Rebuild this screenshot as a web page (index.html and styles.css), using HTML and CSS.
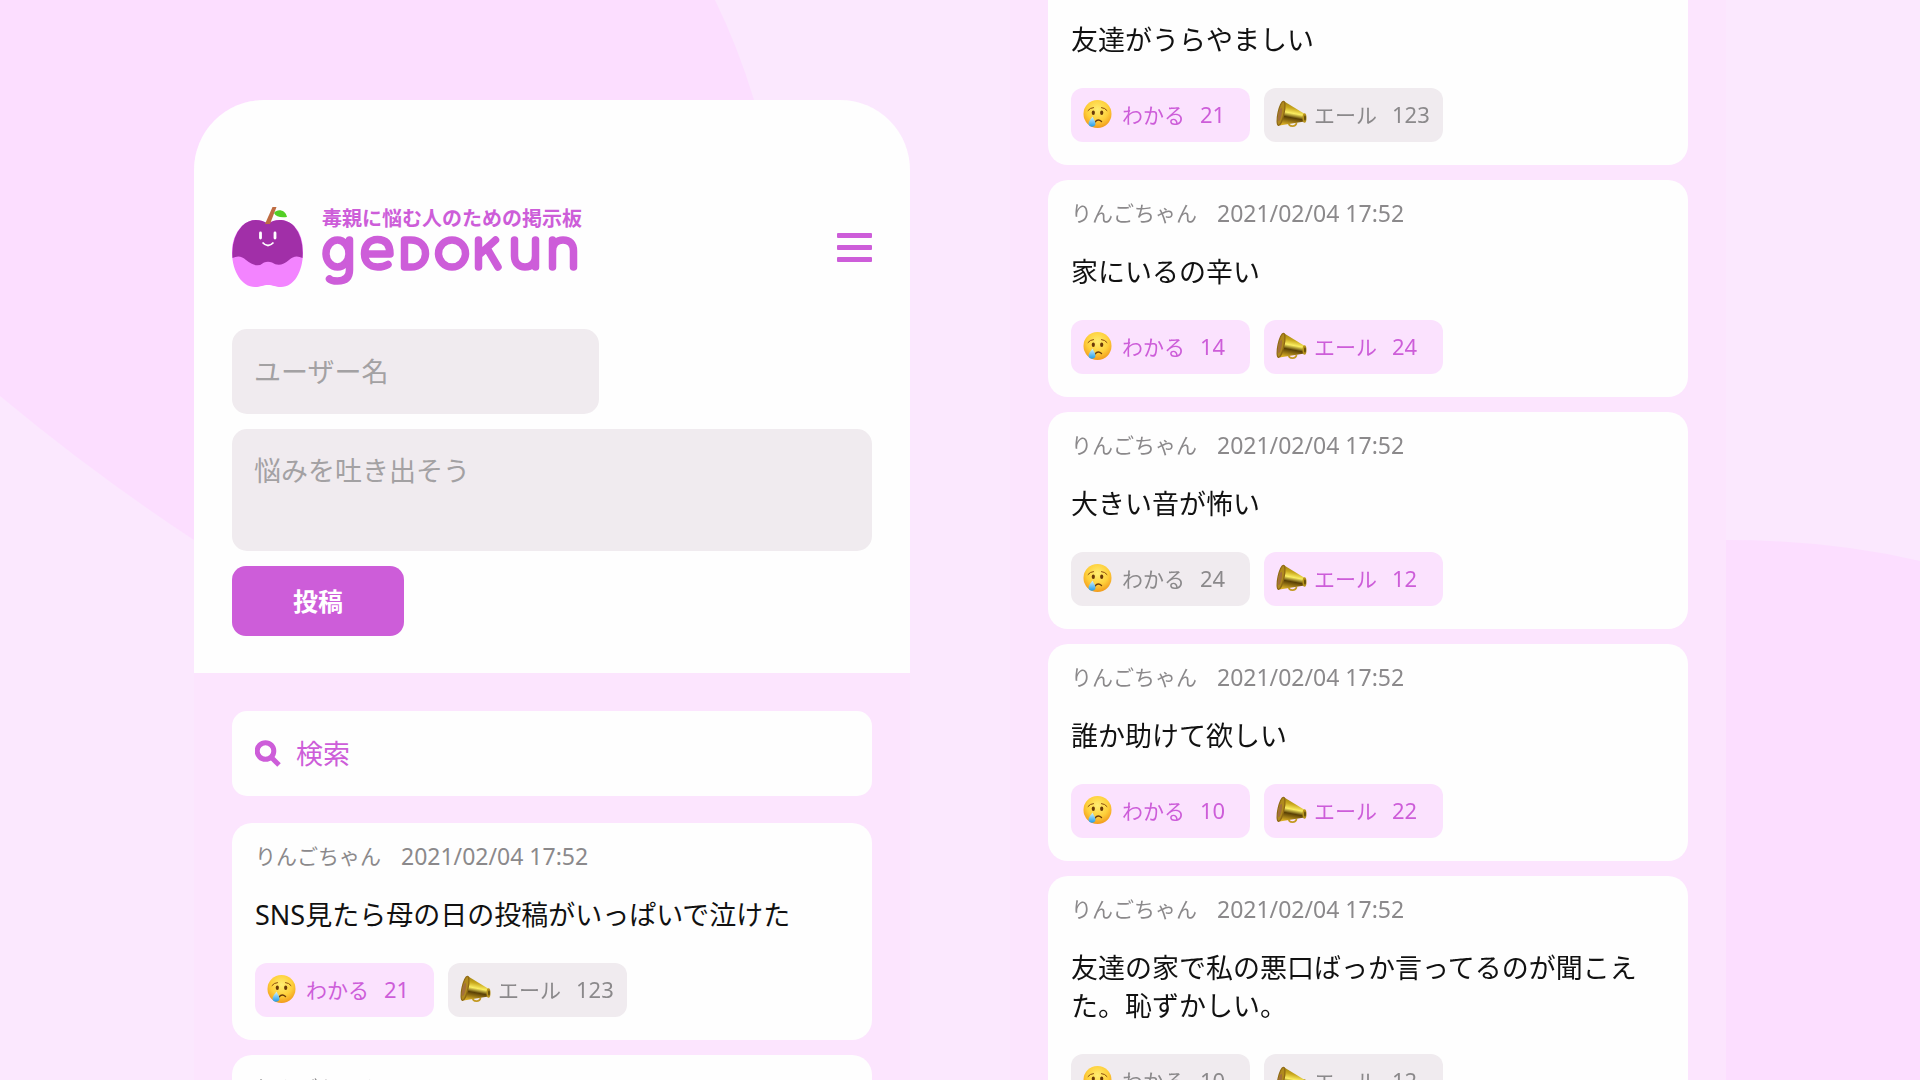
FILE: index.html
```html
<!DOCTYPE html>
<html lang="ja">

<head>
    <meta charset="UTF-8">
    <meta name="viewport" content="width=device-width, initial-scale=1.0">
    <title>gedokun</title>
    <link rel="stylesheet" href="styles.css">
</head>

<body>
    <svg class="defs" aria-hidden="true">
        <defs>
            <radialGradient id="face-fill" cx="50%" cy="35%" r="65%">
                <stop offset="0" stop-color="#ffee72" />
                <stop offset="0.6" stop-color="#fecf3a" />
                <stop offset="1" stop-color="#f19a1c" />
            </radialGradient>
            <linearGradient id="tear-fill" x1="0" y1="0" x2="0" y2="1">
                <stop offset="0" stop-color="#d5f3fd" />
                <stop offset="1" stop-color="#1f9be8" />
            </linearGradient>
            <linearGradient id="horn-fill" x1="0.6" y1="0" x2="0.4" y2="1">
                <stop offset="0" stop-color="#8f720c" />
                <stop offset="0.3" stop-color="#c9a81d" />
                <stop offset="0.5" stop-color="#fbee62" />
                <stop offset="0.68" stop-color="#5a4005" />
                <stop offset="1" stop-color="#d9ae25" />
            </linearGradient>
        </defs>
        <symbol id="cry" viewBox="0 0 28 28">
            <circle cx="14" cy="14" r="14" fill="url(#face-fill)" />
            <ellipse cx="9.800" cy="12.800" rx="1.600" ry="2.200" fill="#6b3a08" />
            <ellipse cx="18.200" cy="12.800" rx="1.600" ry="2.200" fill="#6b3a08" />
            <path d="M4.500 10.500Q6.500 7.800 10 7.600M18 7.600Q21.500 7.800 23.500 10.500" fill="none" stroke="#8a4b0c" stroke-width="1" stroke-linecap="round" />
            <path d="M11.500 22Q14.500 18.500 18 21.500" fill="none" stroke="#6b3a08" stroke-width="1.400" stroke-linecap="round" />
            <path d="M9 16.500C7.500 19 5 21 5 24a3.600 3.600 0 0 0 7 0C12 21 10 19 9 16.500Z" fill="url(#tear-fill)" />
        </symbol>
        <symbol id="horn" viewBox="0 0 31 27">
            <path d="M12.500 21.500C12.500 27 20.500 27 20.500 22" fill="none" stroke="#c39a23" stroke-width="1.800" />
            <path d="M7.500 0.500L28 13Q30 17 28.500 21L3.500 25Z" fill="url(#horn-fill)" />
            <ellipse cx="5" cy="12.800" rx="3" ry="12.300" transform="rotate(12 5 12.800)" fill="#b08a1e" stroke="#8f6914" stroke-width="1.200" />
            <ellipse cx="4" cy="14" rx="1.600" ry="7" transform="rotate(12 4 14)" fill="#a3703c" />
            <ellipse cx="28.500" cy="17.500" rx="2" ry="4.800" fill="#b8931c" />
            <ellipse cx="29" cy="17.500" rx="0.900" ry="2.800" fill="#5f4a08" />
        </symbol>
    </svg>

    <svg class="backdrop" viewBox="0 0 1920 1080" preserveAspectRatio="none" aria-hidden="true">
        <path d="M0 0H715Q738 47 754 100Q830 420 640 560Q440 640 194 540Q95 475 0 396Z" />
        <path d="M1726 540Q1830 540 1920 561V1080H1726Z" />
    </svg>

    <main class="page">
        <section class="panel panel-top">
            <div class="intro">
                <header class="header">
                    <a class="brand" href="#">
                        <svg class="apple" viewBox="0 0 72 81" aria-hidden="true">
                            <path d="M36 17C42 12 54 11 62 19C69 26 71 35 71 45C71 63 63 80 49 80C43 80 41 78 36 78C31 78 29 80 23 80C9 80 0 63 0 45C0 35 3 26 10 19C18 11 29 12 36 17Z" fill="#f384ff" />
                            <path d="M0.500 51Q8 47 14 53Q25 62 32 55.500Q36 54 40 55.500Q48 61 57 53Q63 47 70.500 51Q72 31 62 19C54 11 42 12 36 17C29 12 18 11 10 19Q-1 31 0.500 51Z" fill="#a12fa8" />
                            <path d="M33 17L40.500 0H44.500L38 17Z" fill="#be6c42" />
                            <path d="M42 6C45 2 53 2 55 10C49 11 44 10 42 6Z" fill="#53cf25" />
                            <path d="M28.500 26V31M43 26V31" fill="none" stroke="#fff" stroke-width="2.800" stroke-linecap="round" />
                            <path d="M30.500 35.500Q36 41.500 41.500 35.500" fill="none" stroke="#fff" stroke-width="1.800" />
                        </svg>
                        <span class="brand-text">
                            <span class="tagline">毒親に悩む人のための掲示板</span>
                            <svg class="wordmark" viewBox="0 0 256 50" role="img" aria-label="gedokun">
                                <g fill="none" stroke="#cd5dd9" stroke-width="7.500" stroke-linecap="round" stroke-linejoin="round">
                                    <ellipse cx="15.500" cy="18.500" rx="11.500" ry="13.500" />
                                    <path d="M27.500 5V35Q27.500 46 15.500 46Q9.500 46 7.500 44" />
                                    <path d="M42.500 19H68Q68 4.500 55.500 4.500C47 4.500 42.500 11 42.500 18.500C42.500 27 48 32 55.500 32Q62 32 66 29.500" />
                                    <path d="M82.500 5V32H89C98 32 103.500 26 103.500 18.500C103.500 11 98 5 89 5Z" />
                                    <ellipse cx="130" cy="18.500" rx="13.500" ry="13.500" />
                                    <path d="M156.500 5V32M173.500 5L158 19M166 15L176 32" />
                                    <path d="M192.500 5V21C192.500 28 197 32 203 32C210 32 213.500 27 213.500 21V5M213.500 21V32" />
                                    <path d="M230.500 32V5M230.500 16C230.500 9 235 5 241 5C248 5 251.500 9 251.500 16V32" />
                                </g>
                            </svg>
                        </span>
                    </a>
                    <button class="menu" type="button" aria-label="メニュー">
                        <span></span>
                        <span></span>
                        <span></span>
                    </button>
                </header>

                <form class="post-form">
                    <input class="field name" type="text" placeholder="ユーザー名" aria-label="ユーザー名">
                    <textarea class="field message" placeholder="悩みを吐き出そう" aria-label="悩みを吐き出そう"></textarea>
                    <button class="submit" type="button">投稿</button>
                </form>
            </div>

            <div class="timeline">
                <div class="search">
                    <svg class="search-icon" viewBox="0 0 26 27" aria-hidden="true">
                        <circle cx="10.500" cy="11" r="8.300" />
                        <path d="M17 18L24 25" />
                    </svg>
                    <input class="search-input" type="search" placeholder="検索" aria-label="検索">
                </div>

                <article class="card">
                    <p class="meta"><span>りんごちゃん</span><time>2021/02/04 17:52</time></p>
                    <p class="body">SNS見たら母の日の投稿がいっぱいで泣けた</p>
                    <div class="reactions">
                        <button class="reaction on" type="button"><svg class="emoji"><use href="#cry" /></svg>わかる<span>21</span></button>
                        <button class="reaction" type="button"><svg class="emoji horn"><use href="#horn" /></svg>エール<span>123</span></button>
                    </div>
                </article>

                <article class="card">
                    <p class="meta"><span>りんごちゃん</span><time>2021/02/04 17:52</time></p>
                    <p class="body">友達がうらやましい</p>
                </article>
            </div>
        </section>

        <section class="panel panel-scrolled">
            <div class="timeline">
                <article class="card">
                    <p class="meta"><span>りんごちゃん</span><time>2021/02/04 17:52</time></p>
                    <p class="body">友達がうらやましい</p>
                    <div class="reactions">
                        <button class="reaction on" type="button"><svg class="emoji"><use href="#cry" /></svg>わかる<span>21</span></button>
                        <button class="reaction" type="button"><svg class="emoji horn"><use href="#horn" /></svg>エール<span>123</span></button>
                    </div>
                </article>

                <article class="card">
                    <p class="meta"><span>りんごちゃん</span><time>2021/02/04 17:52</time></p>
                    <p class="body">家にいるの辛い</p>
                    <div class="reactions">
                        <button class="reaction on" type="button"><svg class="emoji"><use href="#cry" /></svg>わかる<span>14</span></button>
                        <button class="reaction on" type="button"><svg class="emoji horn"><use href="#horn" /></svg>エール<span>24</span></button>
                    </div>
                </article>

                <article class="card">
                    <p class="meta"><span>りんごちゃん</span><time>2021/02/04 17:52</time></p>
                    <p class="body">大きい音が怖い</p>
                    <div class="reactions">
                        <button class="reaction" type="button"><svg class="emoji"><use href="#cry" /></svg>わかる<span>24</span></button>
                        <button class="reaction on" type="button"><svg class="emoji horn"><use href="#horn" /></svg>エール<span>12</span></button>
                    </div>
                </article>

                <article class="card">
                    <p class="meta"><span>りんごちゃん</span><time>2021/02/04 17:52</time></p>
                    <p class="body">誰か助けて欲しい</p>
                    <div class="reactions">
                        <button class="reaction on" type="button"><svg class="emoji"><use href="#cry" /></svg>わかる<span>10</span></button>
                        <button class="reaction on" type="button"><svg class="emoji horn"><use href="#horn" /></svg>エール<span>22</span></button>
                    </div>
                </article>

                <article class="card">
                    <p class="meta"><span>りんごちゃん</span><time>2021/02/04 17:52</time></p>
                    <p class="body">友達の家で私の悪口ばっか言ってるのが聞こえた。恥ずかしい。</p>
                    <div class="reactions">
                        <button class="reaction" type="button"><svg class="emoji"><use href="#cry" /></svg>わかる<span>10</span></button>
                        <button class="reaction" type="button"><svg class="emoji horn"><use href="#horn" /></svg>エール<span>12</span></button>
                    </div>
                </article>
            </div>
        </section>
    </main>
</body>

</html>
```

FILE: styles.css
```css
* {
    padding: 0;
    margin: 0;
    box-sizing: border-box;
}

body {
    height: 100vh;
    overflow: hidden;
    background: #fbe8fe;
    color: #111;
    font-family: "Noto Sans", "Noto Sans CJK JP", sans-serif;
}

button,
input,
textarea {
    border: none;
    outline: none;
    font: inherit;
}

button {
    cursor: pointer;
}

.defs {
    position: absolute;
    width: 0;
    height: 0;
}

.backdrop {
    position: fixed;
    inset: 0;
    z-index: -1;
    width: 100%;
    height: 100%;
    fill: #fcdeff;
}

/* two phone screens side by side */
.page {
    display: flex;
    justify-content: center;
    align-items: flex-start;
    gap: 100px;
    height: 100%;
}

.panel {
    flex: 0 1 716px;
    background: #fce5fe;
}

.panel-top {
    margin-top: 100px;
    border-radius: 70px 70px 0 0;
}

/* scrolled down, so its first card is cut by the window */
.panel-scrolled {
    margin-top: -52px;
}

.intro {
    padding: 107px 38px 37px;
    border-radius: 70px 70px 0 0;
    background: #fefefe;
}

.header {
    display: flex;
    justify-content: space-between;
    align-items: center;
}

.brand {
    display: flex;
    gap: 18px;
    color: #cd5dd9;
    text-decoration: none;
}

.apple {
    width: 72px;
    height: 81px;
}

.brand-text {
    display: flex;
    flex-direction: column;
}

.tagline {
    height: 28px;
    font-size: 20px;
    font-weight: 700;
    line-height: 24px;
    white-space: nowrap;
}

.wordmark {
    width: 256px;
    height: 50px;
}

.menu {
    display: flex;
    flex-direction: column;
    gap: 7px;
    width: 35px;
    background: none;
}

.menu span {
    height: 5px;
    border-radius: 1px;
    background: #cd5dd9;
}

.post-form {
    display: flex;
    flex-direction: column;
    align-items: flex-start;
    gap: 15px;
    margin-top: 41px;
}

.field {
    padding: 22px;
    border-radius: 15px;
    background: #f0ebef;
    color: #111;
    font-size: 27px;
    line-height: 40px;
}

.field::placeholder {
    color: #a3a1a3;
}

.name {
    width: 367px;
    height: 85px;
}

.message {
    width: 100%;
    height: 122px;
    resize: none;
}

.submit {
    width: 172px;
    height: 70px;
    padding-bottom: 2px;
    border-radius: 14px;
    background: #cd5dd9;
    color: #fff;
    font-size: 25px;
    font-weight: 700;
}

.timeline {
    display: flex;
    flex-direction: column;
    gap: 15px;
    padding: 38px;
}

.panel-scrolled .timeline {
    padding-top: 0;
}

.search {
    display: flex;
    align-items: center;
    gap: 15px;
    height: 85px;
    margin-bottom: 12px;
    padding: 0 23px;
    border-radius: 15px;
    background: #fefefe;
}

.search-icon {
    width: 26px;
    height: 27px;
    fill: none;
    stroke: #cd5dd9;
    stroke-width: 5;
}

.search-input {
    flex: 1;
    min-width: 0;
    background: none;
    color: #cd5dd9;
    font-size: 27px;
}

.search-input::placeholder {
    color: #cd5dd9;
}

.card {
    padding: 18px 23px 23px;
    border-radius: 20px;
    background: #fefefe;
}

.meta {
    display: flex;
    gap: 20px;
    color: #8b898b;
    font-size: 21px;
    line-height: 30px;
}

.meta time {
    font-size: 23px;
}

.body {
    margin: 25px 0 29px;
    font-size: 27px;
    line-height: 38px;
}

.reactions {
    display: flex;
    gap: 14px;
}

.reaction {
    display: flex;
    align-items: center;
    width: 179px;
    height: 54px;
    padding: 0 12px 2px;
    border-radius: 12px;
    background: #f0ebef;
    color: #8b898b;
    font-size: 21px;
    white-space: nowrap;
}

.reaction span {
    margin-left: 15px;
    font-size: 22px;
}

.reaction.on {
    background: #fbe2fe;
    color: #cd5dd9;
}

.emoji {
    flex-shrink: 0;
    width: 29px;
    height: 28px;
    margin-right: 10px;
}

.emoji.horn {
    width: 31px;
    margin-right: 7px;
}
```
